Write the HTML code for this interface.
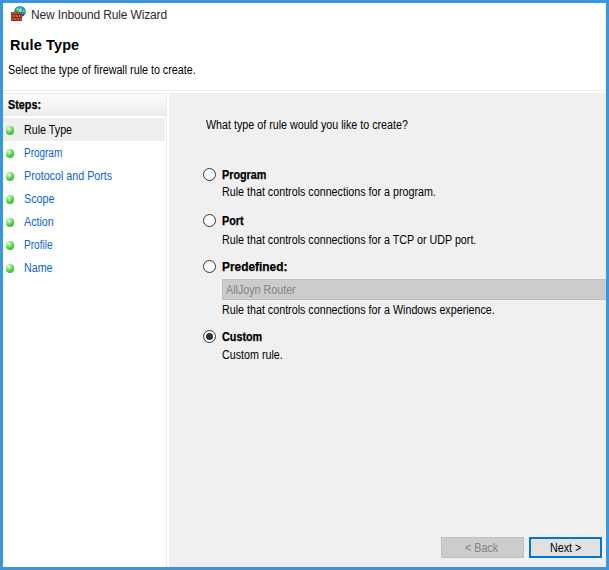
<!DOCTYPE html>
<html><head><meta charset="utf-8">
<style>
*{margin:0;padding:0;box-sizing:border-box}
html,body{width:609px;height:570px;overflow:hidden;background:#fff}
body{position:relative;font-family:"Liberation Sans",sans-serif;font-size:11px;color:#000}
.a{position:absolute;white-space:nowrap;line-height:13px}
#frame{position:absolute;left:0;top:0;width:609px;height:570px;border:3px solid #3a96dd;}
.t{font-size:12px;transform:scaleX(.893);transform-origin:0 0}
.b{font-weight:bold;font-size:12px;transform:scaleX(.9);transform-origin:0 0;-webkit-text-stroke:0.25px #000}
.link{color:#0a64d6}
.dot{position:absolute;left:5.9px;width:8.4px;height:8.6px;border-radius:50%;
 background:radial-gradient(circle at 35% 28%,#eaffe6 0,#a8eea0 22%,#4ccc3c 55%,#38c030 85%,#40b040 100%)}
.radio{position:absolute;left:203px;width:13px;height:13px;border-radius:50%;border:1px solid #333;background:#fff}
.radio.on::after{content:"";position:absolute;left:2px;top:2px;width:7px;height:7px;border-radius:50%;background:#333}
</style></head><body>
<!-- title -->
<svg style="position:absolute;left:10px;top:5px" width="18" height="18" viewBox="0 0 18 18">
 <defs>
  <radialGradient id="g" cx="0.5" cy="0.38" r="0.62"><stop offset="0" stop-color="#c8f4ff"/><stop offset="0.3" stop-color="#3ab4f4"/><stop offset="0.75" stop-color="#1a62d8"/><stop offset="1" stop-color="#1a3aa8"/></radialGradient>
  <radialGradient id="gl" cx="0.6" cy="0.45" r="0.7"><stop offset="0" stop-color="#f0fff0"/><stop offset="0.35" stop-color="#30d030"/><stop offset="1" stop-color="#108818"/></radialGradient>
  <radialGradient id="gr" cx="0.45" cy="0.5" r="0.6"><stop offset="0" stop-color="#80ff40"/><stop offset="0.6" stop-color="#20c020"/><stop offset="1" stop-color="#108830"/></radialGradient>
  <radialGradient id="bk" cx="0.5" cy="0.3" r="0.7"><stop offset="0" stop-color="#e4784a"/><stop offset="0.7" stop-color="#b8502e"/><stop offset="1" stop-color="#8a3420"/></radialGradient>
 </defs>
 <circle cx="10" cy="6.5" r="5.6" fill="url(#g)"/>
 <path d="M4.6 6.2 Q5 3.4 7.4 2.2 Q9.2 2.6 9.4 4.6 Q8.4 6.4 6 6.8 Z" fill="url(#gl)"/>
 <path d="M12.6 3.8 Q14.8 4 15.5 6.6 Q15.2 8.6 13.6 8.6 Q12.4 6.8 12.6 3.8 Z" fill="url(#gr)"/>
 <rect x="1" y="7" width="11" height="9" fill="#7a2c1a"/>
 <g fill="url(#bk)">
  <rect x="1.4" y="7.2" width="2.3" height="2.3"/><rect x="4.3" y="7.2" width="2.3" height="2.3"/><rect x="7.2" y="7.2" width="2.3" height="2.3"/><rect x="10.1" y="7.2" width="1.7" height="2.3"/>
  <rect x="1" y="10.1" width="1.1" height="2.5"/><rect x="2.7" y="10.1" width="2.3" height="2.5"/><rect x="5.6" y="10.1" width="2.3" height="2.5"/><rect x="8.5" y="10.1" width="2.3" height="2.5"/><rect x="11.4" y="10.1" width="0.6" height="2.5"/>
  <rect x="1.4" y="13.2" width="2.3" height="2.5"/><rect x="4.3" y="13.2" width="2.3" height="2.5"/><rect x="7.2" y="13.2" width="2.3" height="2.5"/><rect x="10.1" y="13.2" width="1.7" height="2.5"/>
 </g>
</svg>
<div class="a" style="left:31px;top:8px;font-size:12px;line-height:15px;letter-spacing:-0.15px;color:#2b2b2b">New Inbound Rule Wizard</div>

<!-- header -->
<div class="a" style="left:10px;top:37px;font-size:14.5px;line-height:16px;font-weight:bold;letter-spacing:0.12px">Rule Type</div>
<div class="a t" style="left:8px;top:64px">Select the type of firewall rule to create.</div>

<!-- separators -->
<div style="position:absolute;left:3px;top:90px;width:603px;height:1px;background:#ebebeb"></div>

<!-- left panel -->
<div style="position:absolute;left:3px;top:93px;width:163px;height:23px;background:linear-gradient(#fdfdfd,#ececec);border-top:1px solid #ebebeb"></div>
<div style="position:absolute;left:166px;top:93px;width:1px;height:474px;background:#ececec"></div>
<div class="a b" style="left:8px;top:99px">Steps:</div>
<div style="position:absolute;left:3px;top:118px;width:162px;height:23px;background:#efefef"></div>

<div class="dot" style="top:126.2px"></div>
<div class="dot" style="top:149.2px"></div>
<div class="dot" style="top:172.2px"></div>
<div class="dot" style="top:195.2px"></div>
<div class="dot" style="top:218.2px"></div>
<div class="dot" style="top:241.2px"></div>
<div class="dot" style="top:264.2px"></div>
<div class="a t" style="left:24px;top:124px">Rule Type</div>
<div class="a t link" style="left:24px;top:147px;transform:scaleX(.83)">Program</div>
<div class="a t link" style="left:24px;top:170px">Protocol and Ports</div>
<div class="a t link" style="left:24px;top:193px">Scope</div>
<div class="a t link" style="left:24px;top:216px">Action</div>
<div class="a t link" style="left:24px;top:239px;transform:scaleX(.84)">Profile</div>
<div class="a t link" style="left:24px;top:262px">Name</div>

<!-- right panel -->
<div style="position:absolute;left:169px;top:93px;width:437px;height:474px;background:#f0f0f0"></div>
<div class="a t" style="left:206px;top:119px">What type of rule would you like to create?</div>

<div class="radio" style="top:168px"></div>
<div class="a b" style="left:222px;top:169px">Program</div>
<div class="a t" style="left:222px;top:186px">Rule that controls connections for a program.</div>

<div class="radio" style="top:214px"></div>
<div class="a b" style="left:222px;top:215px">Port</div>
<div class="a t" style="left:222px;top:234px">Rule that controls connections for a TCP or UDP port.</div>

<div class="radio" style="top:260px"></div>
<div class="a b" style="left:222px;top:261px;transform:scaleX(.99)">Predefined:</div>
<div style="position:absolute;left:222px;top:279px;width:384px;height:21px;background:#cccccc;border:1px solid #bfbfbf;border-right:none"></div>
<div class="a t" style="left:226px;top:284px;color:#838383">AllJoyn Router</div>
<div class="a t" style="left:222px;top:304px">Rule that controls connections for a Windows experience.</div>

<div class="radio on" style="top:330px"></div>
<div class="a b" style="left:222px;top:331px">Custom</div>
<div class="a t" style="left:222px;top:349px">Custom rule.</div>

<!-- buttons -->
<div style="position:absolute;left:441px;top:537px;width:83px;height:21px;background:#cccccc;border:1px solid #bfbfbf"></div>
<div class="a t" style="left:465px;top:542px;color:#838383">&lt; Back</div>
<div style="position:absolute;left:529px;top:537px;width:73px;height:21px;background:#e1e1e1;border:2px solid #0078d7"></div>
<div class="a t" style="left:550px;top:542px">Next &gt;</div>

<div id="frame"></div>
</body></html>
